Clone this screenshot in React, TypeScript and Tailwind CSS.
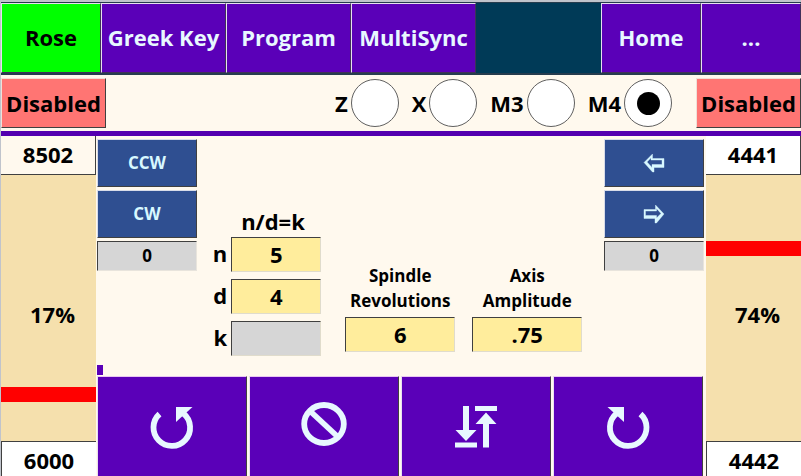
import { useState } from "react";
import type { ReactNode } from "react";

const tabs = ["Rose", "Greek Key", "Program", "MultiSync"];
const motors = ["Z", "X", "M3", "M4"];

function Tab({ label, active, onClick }: { label: string; active?: boolean; onClick?: () => void }) {
  return (
    <button
      type="button"
      onClick={onClick}
      className={`min-w-0 whitespace-nowrap border border-t-[#e8e0f0] border-l-[#e8e0f0] border-r-[#40305a] border-b-[#40305a] pb-0.5 ${
        active ? "bg-[#00ff00] text-black" : "bg-[#5a00b8] text-[#e8f8ff]"
      }`}
    >
      {label}
    </button>
  );
}

function EnableButton() {
  return (
    <button
      type="button"
      className="h-[50px] w-[105px] shrink-0 border border-t-[#f0e0d8] border-l-[#f0e0d8] border-r-[#404040] border-b-[#404040] bg-[#ff7573]"
    >
      Disabled
    </button>
  );
}

function Gauge({ top, bottom, percent, marker, cream }: { top: string; bottom: string; percent: string; marker: number; cream?: boolean }) {
  return (
    <section className="flex w-[95px] shrink-0 flex-col text-center">
      <output className={`h-[39px] border-r border-b border-[#404040] leading-[36px] ${cream ? "bg-[#fff9ee]" : "bg-white"}`}>{top}</output>
      <div className="relative flex grow items-center justify-center bg-[#f5e0ad] pt-3 pl-2">
        <div className="absolute inset-x-0 h-[15px] bg-[#ff0000]" style={{ top: `${marker}%` }} />
        {percent}
      </div>
      <output className="h-[35px] overflow-hidden border-t border-l border-[#404040] bg-white leading-[36px]">{bottom}</output>
    </section>
  );
}

function JogButton({ label, children }: { label: string; children: ReactNode }) {
  return (
    <button
      type="button"
      aria-label={label}
      className="flex h-12 items-center justify-center border border-t-[#d8dce8] border-l-[#d8dce8] border-r-[#404040] border-b-[#404040] bg-[#2f4f91] text-[#d8f8ff]"
    >
      {children}
    </button>
  );
}

function JogStack({ children }: { children: ReactNode }) {
  return (
    <div className="flex w-[100px] shrink-0 flex-col gap-[3px] pt-[3px] text-[17px]">
      {children}
      <output className="h-[30px] border border-t-[#404040] border-l-[#404040] border-r-[#e8e4dc] border-b-[#e8e4dc] bg-[#d6d6d6] text-center leading-[28px]">0</output>
    </div>
  );
}

const field =
  "h-[35px] min-w-0 border border-t-[#404040] border-l-[#404040] border-r-[#e0dccc] border-b-[#e0dccc] pb-0.5 text-center outline-none";

function RatioField({ name, value, locked }: { name: string; value: string; locked?: boolean }) {
  return (
    <div className="flex items-center justify-end gap-1">
      <label htmlFor={name} className="pb-1 leading-7">
        {name}
      </label>
      <input id={name} defaultValue={value} readOnly={locked} className={`${field} w-[90px] ${locked ? "bg-[#d6d6d6]" : "bg-[#ffed9c]"}`} />
    </div>
  );
}

function AmountField({ id, first, second, value }: { id: string; first: string; second: string; value: string }) {
  return (
    <div className="flex w-[110px] flex-col gap-1">
      <label htmlFor={id} className="text-center text-[17px] leading-[25px]">
        {first}
        <br />
        {second}
      </label>
      <input id={id} defaultValue={value} className={`${field} bg-[#ffed9c]`} />
    </div>
  );
}

function DriveButton({ label, children }: { label: string; children: ReactNode }) {
  return (
    <button
      type="button"
      aria-label={label}
      className="flex h-[100px] grow basis-0 items-center justify-center border border-b-0 border-t-[#e8c8f0] border-l-[#e8e0f0] border-r-[#404040] bg-[#5a00b8] text-[#e8f8ff]"
    >
      {children}
    </button>
  );
}

function TurnIcon({ flip }: { flip?: boolean }) {
  return (
    <svg width="44" height="44" viewBox="0 0 44 44" className={flip ? "-scale-x-100" : ""} aria-hidden="true">
      <path d="M9.5 9 A18.3 18.3 0 1 0 33.5 8.5" fill="none" stroke="currentColor" strokeWidth="5.8" />
      <path d="M26 2 H42.5 L26 17 Z" fill="currentColor" />
    </svg>
  );
}

export default function App() {
  const [tab, setTab] = useState("Rose");
  const [motor, setMotor] = useState("M4");
  return (
    <div className="flex min-h-screen flex-col border-t-2 border-l border-[#c0c4cc] bg-[#fff9ee] font-['Open_Sans','Noto_Sans',sans-serif] text-[22px] font-bold text-black">
      <nav className="grid h-[73px] grid-cols-[4fr_5fr_5fr_5fr_5fr_4fr_4fr] border-t border-b-2 border-[#263c4e] bg-[#003a57]">
        {tabs.map((t) => (
          <Tab key={t} label={t} active={t === tab} onClick={() => setTab(t)} />
        ))}
        <div />
        <Tab label="Home" />
        <Tab label="..." />
      </nav>

      <div className="flex h-14 items-center justify-between">
        <EnableButton />
        <fieldset className="ml-auto mr-6 flex gap-[13px]">
          {motors.map((m) => (
            <label key={m} className="flex items-center gap-[3px]">
              {m}
              <input
                type="radio"
                name="motor"
                checked={motor === m}
                onChange={() => setMotor(m)}
                className="flex size-12 appearance-none items-center justify-center rounded-full border border-[#606060] bg-white checked:before:size-[23px] checked:before:rounded-full checked:before:bg-black"
              />
            </label>
          ))}
        </fieldset>
        <EnableButton />
      </div>
      <div className="h-[5px] bg-[#5400b0]" />

      <main className="flex grow">
        <Gauge top="8502" bottom="6000" percent="17%" marker={79.7} cream />
        <div className="flex grow flex-col pr-[2px] pl-px">
          <div className="flex grow">
            <JogStack>
              <JogButton label="CCW">CCW</JogButton>
              <JogButton label="CW">CW</JogButton>
            </JogStack>
            <div className="flex grow items-start justify-center gap-6 pt-[71px] pr-1.5">
              <div className="flex flex-col gap-[7px]">
                <h2 className="-mb-[5px] pl-3 text-center leading-7">n/d=k</h2>
                <RatioField name="n" value="5" />
                <RatioField name="d" value="4" />
                <RatioField name="k" value="" locked />
              </div>
              <div className="flex gap-[17px] pt-14">
                <AmountField id="revolutions" first="Spindle" second="Revolutions" value="6" />
                <AmountField id="amplitude" first="Axis" second="Amplitude" value=".75" />
              </div>
            </div>
            <JogStack>
              <JogButton label="Left">
                <svg width="22" height="20" viewBox="0 0 22 20" aria-hidden="true">
                  <path d="M1 9.5 L9.5 1 V5.5 H21 V14.5 H11 V19 H9.5 Z M4 9 L9 14.5 V11.5 H19 V7 H8 V4.8 Z" fill="currentColor" fillRule="evenodd" stroke="currentColor" strokeWidth="0.4" />
                </svg>
              </JogButton>
              <JogButton label="Right">
                <svg width="22" height="20" viewBox="0 0 22 20" aria-hidden="true">
                  <path d="M21 10 L12.5 1 V5.5 H1 V14.5 H12 V19 H13.5 Z M18 9.5 L13.5 14 V11.5 H2.5 V7 H13.5 V4.5 Z" fill="currentColor" fillRule="evenodd" stroke="currentColor" strokeWidth="0.4" />
                </svg>
              </JogButton>
            </JogStack>
          </div>
          <div className="mb-px h-[10px] w-[6px] bg-[#5a00b8]" />
          <div className="flex gap-[2px] pr-px">
            <DriveButton label="Rotate counterclockwise">
              <TurnIcon />
            </DriveButton>
            <DriveButton label="Stop">
              <svg width="46" height="44" viewBox="0 0 46 44" className="mb-1.5" aria-hidden="true">
                <ellipse cx="23" cy="22" rx="19.8" ry="19" fill="none" stroke="currentColor" strokeWidth="5.8" />
                <path d="M9 9 L37 35" stroke="currentColor" strokeWidth="5.6" />
              </svg>
            </DriveButton>
            <DriveButton label="Move between limits">
              <svg width="42" height="42" viewBox="0 0 42 42" aria-hidden="true">
                <path d="M8 0 H14 V24 H21.5 L11 35 L.5 24 H8 Z M0 36.5 H22 V41.5 H0 Z M20 0 H42 V5 H20 Z M28 41.5 H34 V18 H41.5 L31 6.5 L20.5 18 H28 Z" fill="currentColor" />
              </svg>
            </DriveButton>
            <DriveButton label="Rotate clockwise">
              <TurnIcon flip />
            </DriveButton>
          </div>
        </div>
        <Gauge top="4441" bottom="4442" percent="74%" marker={24.8} />
      </main>
    </div>
  );
}
